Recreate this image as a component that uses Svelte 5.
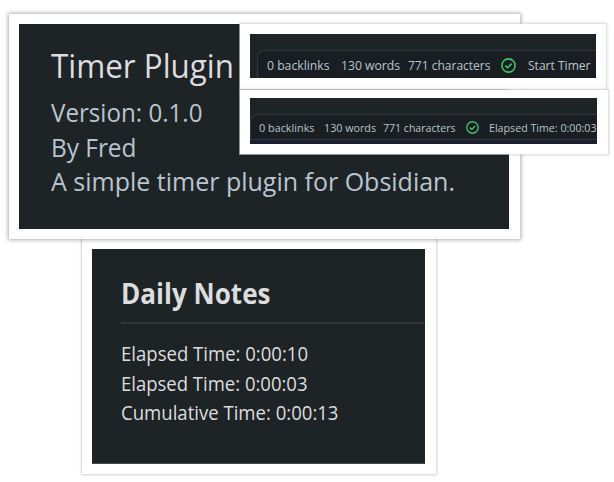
<script>
  const about = [
    { text: 'Version: 0.1.0', width: 151.5 },
    { text: 'By Fred', width: 85.5 },
    { text: 'A simple timer plugin for Obsidian.', width: 404 }
  ];

  const notes = [
    { text: 'Elapsed Time: 0:00:10', width: 187 },
    { text: 'Elapsed Time: 0:00:03', width: 186.5 },
    { text: 'Cumulative Time: 0:00:13', width: 217.5 }
  ];

  // Condenses a label horizontally so that it fills its given width.
  function fit(node, width) {
    const natural = node.getBoundingClientRect().width;
    node.style.transform = `scaleX(${width / natural})`;
    node.parentElement.style.width = `${width}px`;
  }
</script>

{#snippet label(text, width)}
  <span class="box"><span class="label" use:fit={width}>{text}</span></span>
{/snippet}

{#snippet check()}
  <svg class="check" viewBox="0 0 24 24" fill="none" stroke="currentColor" stroke-width="2.5">
    <circle cx="12" cy="12" r="10.6" />
    <path d="M7 12.2 10.6 15.6l6.4-6.6" />
  </svg>
{/snippet}

<main>
  <section class="card daily">
    <div class="screen">
      <h2>{@render label('Daily Notes', 149.5)}</h2>
      {#each notes as n}
        <p>{@render label(n.text, n.width)}</p>
      {/each}
    </div>
  </section>

  <section class="card plugin">
    <div class="screen">
      <h1>{@render label('Timer Plugin', 183)}</h1>
      {#each about as a}
        <p>{@render label(a.text, a.width)}</p>
      {/each}
    </div>
  </section>

  <section class="card status idle">
    <div class="screen">
      <div class="bar">
        {@render label('0 backlinks', 62.5)}
        {@render label('130 words', 59)}
        {@render label('771 characters', 82.5)}
        {@render check()}
        {@render label('Start Timer', 62.5)}
      </div>
    </div>
  </section>

  <section class="card status running">
    <div class="screen">
      <div class="bar">
        {@render label('0 backlinks', 55.5)}
        {@render label('130 words', 52)}
        {@render label('771 characters', 72.5)}
        {@render check()}
        {@render label('Elapsed Time: 0:00:03', 107.5)}
      </div>
    </div>
  </section>
</main>

<style>
  :global(body) {
    margin: 0;
    background: #fff;
  }

  main {
    position: relative;
    width: 614px;
    height: 482px;
    overflow: hidden;
    background: #fff;
    font-family: 'Open Sans', 'Noto Sans', sans-serif;
  }

  .card {
    position: absolute;
    box-sizing: border-box;
    background: #fff;
  }

  .screen {
    box-sizing: border-box;
    height: 100%;
    overflow: hidden;
    background: #1e2326;
  }

  h1, h2, p {
    margin: 0;
    font-weight: 400;
  }

  .box {
    display: block;
    flex: none;
    white-space: nowrap;
  }

  .label {
    display: inline-block;
    transform-origin: 0 50%;
    vertical-align: top;
  }

  .plugin {
    left: 9px;
    top: 14px;
    width: 511px;
    height: 225px;
    padding: 10px 11px 10px 10px;
    box-shadow: 0 0 4px 1px rgba(0, 0, 0, 0.32);
  }

  .plugin .screen {
    padding: 20px 0 0 32px;
  }

  .plugin h1 {
    margin-bottom: 7px;
    color: #dcddde;
    font-size: 33px;
    line-height: 44px;
  }

  .plugin p {
    color: #b9c5cf;
    font-size: 25.3px;
    line-height: 34.6px;
  }

  .daily {
    left: 82px;
    top: 239px;
    width: 354px;
    height: 235px;
    padding: 10px 11px 10px 10px;
    box-shadow: 0 0 2px 1px rgba(0, 0, 0, 0.18);
  }

  .daily .screen {
    padding: 26px 0 0 28.5px;
    border-bottom: 1px solid #454a4f;
  }

  .daily h2 {
    box-sizing: border-box;
    height: 49px;
    margin-bottom: 15px;
    border-bottom: 2px solid #32363a;
    color: #dcddde;
    font-size: 28px;
    font-weight: 700;
    line-height: 37px;
  }

  .daily p {
    color: #dcddde;
    font-size: 19.5px;
    line-height: 29.6px;
  }

  .idle {
    left: 240px;
    top: 24px;
    width: 366px;
    height: 65px;
    padding: 10px 10px 11px;
  }

  .running {
    left: 240px;
    top: 90px;
    width: 368px;
    height: 64px;
    padding: 8px 11px 10px 10px;
  }

  .status {
    box-shadow: 0 0 0 1px rgba(222, 222, 222, 0.6), 0 0 3px 1px rgba(0, 0, 0, 0.14);
  }

  .bar {
    display: flex;
    box-sizing: border-box;
    border: 1px solid #34383c;
    border-right: 0;
    border-radius: 8px 0 0 0;
    background: #1a1d21;
    color: #b9c5cf;
  }

  .idle .bar {
    height: 30px;
    margin: 16px 0 0 7px;
    padding: 5px 0 0 9px;
    border-bottom: 0;
    font-size: 12.5px;
    line-height: 20px;
  }

  .running .screen {
    background: linear-gradient(#1e2326 41px, #1c2030 41px);
  }

  .running .bar {
    height: 26px;
    margin-top: 16px;
    padding: 3px 0 0 8px;
    font-size: 11.3px;
    line-height: 20px;
  }

  .check {
    flex: none;
    color: #3fc668;
  }

  .idle .check {
    width: 15px;
    height: 15px;
    margin: 1.5px 12px 0 10.5px;
  }

  .running .check {
    width: 13px;
    height: 13px;
    margin: 3px 10px 0 10.5px;
  }

  .idle .box:nth-child(2) {
    margin: 0 8px 0 11px;
  }

  .running .box:nth-child(2) {
    margin: 0 7px 0 9.5px;
  }
</style>
